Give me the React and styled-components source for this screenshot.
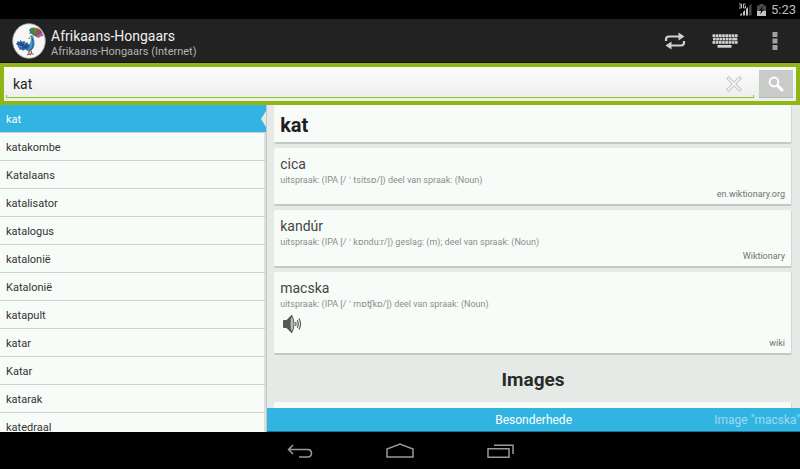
import React, { useState } from "react";
import styled, { createGlobalStyle } from "styled-components";

const words = [
  "kat",
  "katakombe",
  "Katalaans",
  "katalisator",
  "katalogus",
  "katalonië",
  "Katalonië",
  "katapult",
  "katar",
  "Katar",
  "katarak",
  "katedraal",
];

const results = [
  {
    title: "cica",
    info: "uitspraak: (IPA [/ ˈ tsitsɒ/]) deel van spraak: (Noun)",
    source: "en.wiktionary.org",
  },
  {
    title: "kandúr",
    info: "uitspraak: (IPA [/ ˈ kɒndu:r/]) geslag: (m); deel van spraak: (Noun)",
    source: "Wiktionary",
  },
  {
    title: "macska",
    info: "uitspraak: (IPA [/ ˈ mɒʧkɒ/]) deel van spraak: (Noun)",
    source: "wiki",
    audio: true,
  },
];

export default function App() {
  const [query, setQuery] = useState("kat");
  const [selected, setSelected] = useState("kat");

  return (
    <Screen>
      <GlobalStyle />
      <StatusBar>
        <SignalIcon />
        <BatteryIcon />
        <Clock>5:23</Clock>
      </StatusBar>

      <ActionBar>
        <LogoIcon />
        <Titles>
          <Title>Afrikaans-Hongaars</Title>
          <Subtitle>Afrikaans-Hongaars (Internet)</Subtitle>
        </Titles>
        <ActionButton aria-label="Swap languages">
          <SwapIcon />
        </ActionButton>
        <ActionButton aria-label="Keyboard">
          <KeyboardIcon />
        </ActionButton>
        <ActionButton aria-label="More options">
          <MoreIcon />
        </ActionButton>
      </ActionBar>

      <SearchBar onSubmit={(e) => e.preventDefault()}>
        <SearchField>
          <SearchInput
            aria-label="Search"
            value={query}
            onChange={(e) => setQuery(e.target.value)}
          />
          <ClearButton
            type="button"
            aria-label="Clear"
            onClick={() => setQuery("")}
          >
            <ClearIcon />
          </ClearButton>
        </SearchField>
        <SearchButton aria-label="Search">
          <SearchIcon />
        </SearchButton>
      </SearchBar>

      <Content>
        <WordList>
          {words.map((word) => (
            <li key={word}>
              <WordButton
                $active={word === selected}
                onClick={() => setSelected(word)}
              >
                {word}
                {word === selected && <Notch />}
              </WordButton>
            </li>
          ))}
        </WordList>

        <Detail>
          <Cards>
            <HeadCard>
              <Headword>{selected}</Headword>
            </HeadCard>
            {results.map((item) => (
              <Card key={item.title}>
                <Translation>{item.title}</Translation>
                <Info>{item.info}</Info>
                {item.audio && (
                  <AudioButton aria-label="Play">
                    <SpeakerIcon />
                  </AudioButton>
                )}
                <Source>{item.source}</Source>
              </Card>
            ))}
            <SectionTitle>Images</SectionTitle>
            <Card />
          </Cards>
          <PageTabs>
            <PageTab $active>Besonderhede</PageTab>
            <PageTab>Image "macska"</PageTab>
          </PageTabs>
        </Detail>
      </Content>

      <NavBar>
        <NavButton aria-label="Back">
          <BackIcon />
        </NavButton>
        <NavButton aria-label="Home">
          <HomeIcon />
        </NavButton>
        <NavButton aria-label="Recent apps">
          <RecentIcon />
        </NavButton>
      </NavBar>
    </Screen>
  );
}

const SignalIcon = () => (
  <svg width="14" height="14" viewBox="0 0 14 14">
    <path d="M1 11.5 3 10v2.500H1zM4 9l2-2v5.500H4zM7 6l2-2v8.500H7z" fill="#c4c4c4" />
    <path d="M10 3l2.500-2.500v12H10z" fill="#4a4a4a" />
    <path
      d="M0 1h2.500v4H0M.5 3h2M6.500 1H4.500v4h2V3H5.800"
      fill="none"
      stroke="#cfcfcf"
      strokeWidth="0.9"
    />
  </svg>
);

const BatteryIcon = () => (
  <svg width="9" height="12" viewBox="0 0 9 12">
    <path d="M2.5 0h4v1.500H9V12H0V1.500h2.500z" fill="#4c4c4c" />
    <path d="M0 7h9v5H0z" fill="#c4c4c4" />
    <path d="M6 2 2 6.500h2.200L3 10.500l4-5H4.800z" fill="#0c0c0c" />
  </svg>
);

const LogoIcon = () => (
  <svg width="34" height="36" viewBox="0 0 34 36">
    <ellipse cx="17" cy="18" rx="16.3" ry="17.3" fill="#f6f6f6" stroke="#a9a9a9" strokeWidth="0.8" />
    <path d="M17 7l2-2 3-.5 1 3-1 5.500-3-2.500-2 .5 1-2z" fill="#3f8650" />
    <path d="M22 4.500l3 .5 1 3-3 5h-1.500z" fill="#7c8a3e" />
    <path d="M25 5l3 1.500.5 2.500-4 4h-2z" fill="#a5543c" />
    <path d="M28 6.500l2.500 3-2 2-5 2z" fill="#8a4a8c" />
    <path d="M30 9.500l1.500 3.500-3 .5-2 1.500-3.500-1.500z" fill="#b35aa6" />
    <path d="M19 8l3 4M22 6l.5 6M25.500 7l-2.500 5M28.500 10l-5 3" stroke="#53733a" strokeWidth="0.800" />
    <path d="M17.500 13q2-1.500 3.500 0 1 2 1.500 5.500t-1 6.500q-1.500 3-4.500 3.500-3-.5-3.500-3 0-2 3-3.500 2.500-1.500 2.500-7.500z" fill="#4b94c4" />
    <path d="M20.300 15q1.500 5 .2 9.500-1 2.500-3.500 3" fill="none" stroke="#2b6398" strokeWidth="1.200" />
    <path d="M18 14l-2.300 1.800 2.800.3z" fill="#c8873e" />
    <path
      d="M3.800 21l1.200-1 .3-2 2.200 1 1-2 1.800 2 2-1.200 1 2.200 2.200-.8.8 2 1.700.8-.5 2.500-2 2-2.500 0-2 1.200-1.500-1.200-2.500.3.500-1.800-2-1 .8-1.200z"
      fill="#2b62a5"
    />
    <path d="M6 21l3 1.500 3-1 4 2M8 25l3-1.300 4 1.300M8.500 19.500l1.500 2" stroke="#173a72" strokeWidth="0.900" fill="none" />
    <path d="M7 23.500l3 .5M12 20.500l1.500 1" stroke="#6fa6d8" />
    <path d="M17 28v3l-2 1M19 27.500l.5 3 2 .8M17 31l2 .6" stroke="#94502e" strokeWidth="1.200" fill="none" />
  </svg>
);

const SwapIcon = () => (
  <svg width="22" height="18" viewBox="0 0 22 18">
    <path
      d="M2 9V7.500q0-3 3-3h11M20 9v1.500q0 3-3 3H6"
      fill="none"
      stroke="#d0d0d0"
      strokeWidth="2.200"
    />
    <path d="M14.500.5l6 4-6 4zM7.500 9.500v8l-6-4z" fill="#d0d0d0" />
  </svg>
);

const keyColumns = [0, 1, 2, 3, 4, 5, 6, 7];

const KeyboardIcon = () => (
  <svg width="26" height="14" viewBox="0 0 26 14" fill="#d2d2d2">
    {keyColumns.map((i) => (
      <React.Fragment key={i}>
        <rect x={0.5 + i * 3.2} y="0.300" width="2.700" height="2.700" />
        <rect x={(i === 7 ? 0.2 : 1) + i * 3.2} y="3.700" width="2.700" height="2.700" />
        <rect x={0.5 + i * 3.2} y="7.100" width="2.700" height="2.700" />
      </React.Fragment>
    ))}
    <rect x="5.500" y="11" width="14" height="2.700" />
  </svg>
);

const MoreIcon = () => (
  <svg width="6" height="18" viewBox="0 0 6 18" fill="#a0a0a0">
    <rect x="0.500" width="5" height="5" />
    <rect x="0.500" y="6.500" width="5" height="5" />
    <rect x="0.500" y="13" width="5" height="5" />
  </svg>
);

const ClearIcon = () => (
  <svg width="16" height="16" viewBox="0 0 16 16" strokeLinecap="square">
    <path d="M2.500 2.500l11 11M13.500 2.500l-11 11" stroke="#bfc1bf" strokeWidth="3.400" />
    <path d="M2.500 2.500l11 11M13.500 2.500l-11 11" stroke="#f8f8f8" strokeWidth="1.600" />
  </svg>
);

const SearchIcon = () => (
  <svg width="16" height="16" viewBox="0 0 16 16" fill="none" stroke="#fff">
    <circle cx="6" cy="6" r="4.400" strokeWidth="2" />
    <path d="M9.500 9.500l4.500 4.500" strokeWidth="3" strokeLinecap="round" />
  </svg>
);

const SpeakerIcon = () => (
  <svg width="20" height="20" viewBox="0 0 20 20">
    <path d="M1 7q0-1 1-1h2.500L9 1.500Q10 .5 10.500 2v16q-.5 1.500-1.500.5L4.500 14H2q-1 0-1-1z" fill="#565a57" />
    <path d="M9.500 1.500q2.500 3 2.500 8.500t-2.500 8.500q-1.500-3-1.500-8.500t1.500-8.500z" fill="#b9bdb9" stroke="#565a57" />
    <path
      d="M13.500 8q1 2 0 4M15.300 6.300q1.800 3.700 0 7.400M17 4.500q3 5.500 0 11"
      fill="none"
      stroke="#565a57"
      strokeWidth="1.200"
    />
  </svg>
);

const BackIcon = () => (
  <svg width="26" height="14" viewBox="0 0 26 14" fill="none" stroke="#999" strokeWidth="1.500">
    <path d="M2 5.500h18.500q4 0 4 3.700t-4 3.700H12M6 1L1.500 5.500 6 10" />
  </svg>
);

const HomeIcon = () => (
  <svg width="28" height="15" viewBox="0 0 28 15" fill="none" stroke="#999" strokeWidth="1.500">
    <path d="M1 14V6L14 1l13 5v8z" />
  </svg>
);

const RecentIcon = () => (
  <svg width="27" height="14" viewBox="0 0 27 14" fill="none" stroke="#999" strokeWidth="1.500">
    <path d="M1 4.800h21v8.400H1zM7 1.200h19V10" />
  </svg>
);

const GlobalStyle = createGlobalStyle`
  * {
    box-sizing: border-box;
  }
  body {
    margin: 0;
    background: #000;
    font-family: Roboto, "DejaVu Sans", sans-serif;
  }
  button,
  input {
    margin: 0;
    padding: 0;
    border: 0;
    font-family: inherit;
  }
  h1, h2, h3, p, ul {
    margin: 0;
    padding: 0;
  }
  svg {
    display: block;
  }
`;

const Screen = styled.div`
  display: flex;
  flex-direction: column;
  height: 100vh;
  overflow: hidden;
`;

const StatusBar = styled.div`
  display: flex;
  align-items: center;
  justify-content: flex-end;
  gap: 4px;
  flex: none;
  height: 19px;
  padding-right: 4px;
  background: #000;
`;

const Clock = styled.span`
  margin-left: 1px;
  font-size: 13px;
  line-height: 18px;
  color: #bebebe;
`;

const ActionBar = styled.header`
  display: flex;
  align-items: center;
  flex: none;
  height: 44px;
  padding-left: 12px;
  background: #222;
  border-bottom: 1px solid #111;
`;

const Titles = styled.div`
  flex: 1;
  padding: 4px 0 0 5px;
`;

const Title = styled.h1`
  font-size: 14px;
  font-weight: 400;
  line-height: 17px;
  color: #f0f0f0;
`;

const Subtitle = styled.p`
  font-size: 11px;
  line-height: 13px;
  color: #b3b3b3;
`;

const ActionButton = styled.button`
  display: flex;
  align-items: center;
  justify-content: center;
  width: 50px;
  height: 40px;
  background: none;
`;

const SearchBar = styled.form`
  display: flex;
  flex: none;
  gap: 5px;
  height: 42px;
  padding: 3px 3px 3px 2px;
  border: 4px solid #8fb614;
  background: linear-gradient(#fbfcfb, #eceeec);
`;

const SearchField = styled.div`
  display: flex;
  align-items: center;
  flex: 1;
  background:
    linear-gradient(#8fc31f, #8fc31f) left bottom / 1px 3px no-repeat,
    linear-gradient(#8fc31f, #8fc31f) right bottom / 1px 3px no-repeat,
    linear-gradient(#8fc31f, #8fc31f) left bottom / 100% 1px no-repeat;
`;

const SearchInput = styled.input`
  flex: 1;
  min-width: 0;
  height: 24px;
  padding-left: 7px;
  background: none;
  outline: none;
  font-size: 14px;
  color: #222;
`;

const ClearButton = styled.button`
  display: flex;
  align-items: center;
  justify-content: center;
  width: 40px;
  background: none;
`;

const SearchButton = styled.button`
  display: flex;
  align-items: center;
  justify-content: center;
  width: 34px;
  background: #c9cbc9;
  border-bottom: 1px solid #b5b7b5;
`;

const Content = styled.main`
  display: flex;
  flex: 1;
  min-height: 0;
  background: #e6eae6;
`;

const WordList = styled.ul`
  width: 33.4%;
  overflow: hidden;
  list-style: none;
  background: #f8fcf8;
  border-right: 1px solid #c3c8c4;
`;

const WordButton = styled.button`
  display: flex;
  align-items: center;
  justify-content: space-between;
  width: 100%;
  height: 28px;
  padding: 1px 0 0 6px;
  border-bottom: 1px solid #cfd3cf;
  background: ${({ $active }) => ($active ? "#31b4e1" : "none")};
  box-shadow: ${({ $active }) => ($active ? "none" : "inset -2px 0 #dde1dd")};
  font-size: 11px;
  color: ${({ $active }) => ($active ? "#fff" : "#333")};
`;

const Notch = styled.span`
  border: solid transparent;
  border-width: 8px 5px 8px 0;
  border-right-color: #e6eae6;
`;

const Detail = styled.section`
  display: flex;
  flex-direction: column;
  flex: 1;
  min-width: 0;
`;

const Cards = styled.div`
  display: flex;
  flex-direction: column;
  gap: 4px;
  flex: 1;
  min-height: 0;
  overflow: hidden;
  padding: 0 8px 0 7px;
`;

const Card = styled.article`
  display: flex;
  flex-direction: column;
  flex: none;
  min-height: 58px;
  padding: 8px 6px 4px;
  background: #f8fcf8;
  border-bottom: 2px solid #c5c9c5;
  border-right: 1px solid #d3d7d3;
  border-radius: 2px;
`;

const HeadCard = styled(Card)`
  min-height: 39px;
  padding: 9px 6px 6px;
`;

const Headword = styled.h2`
  font-size: 20px;
  font-weight: 700;
  line-height: 22px;
  color: #1e1e1e;
`;

const Translation = styled.h3`
  font-size: 14px;
  font-weight: 400;
  line-height: 17px;
  color: #444;
`;

const Info = styled.p`
  font-size: 9px;
  line-height: 15px;
  color: #8b8e8b;
`;

const AudioButton = styled.button`
  align-self: flex-start;
  margin: 2px 0 3px 2px;
  background: none;
`;

const Source = styled.p`
  margin-top: auto;
  font-size: 9px;
  line-height: 12px;
  text-align: right;
  color: #6f726f;
`;

const SectionTitle = styled.h2`
  padding: 10px 0 7px;
  font-size: 19px;
  font-weight: 700;
  line-height: 22px;
  text-align: center;
  color: #2a2a2a;
`;

const PageTabs = styled.nav`
  display: grid;
  grid-template-columns: 1fr auto 1fr;
  flex: none;
  height: 24px;
  background: #31b4e1;
  border-bottom: 1px solid #1b7391;
`;

const PageTab = styled.button`
  grid-column: ${({ $active }) => ($active ? 2 : 3)};
  justify-self: end;
  background: none;
  font-size: 12px;
  white-space: nowrap;
  color: ${({ $active }) => ($active ? "#fff" : "#9adcf2")};
`;

const NavBar = styled.nav`
  display: flex;
  align-items: center;
  justify-content: center;
  flex: none;
  height: 37px;
  background: #000;
`;

const NavButton = styled.button`
  display: flex;
  align-items: center;
  justify-content: center;
  width: 100px;
  height: 37px;
  background: none;
`;
